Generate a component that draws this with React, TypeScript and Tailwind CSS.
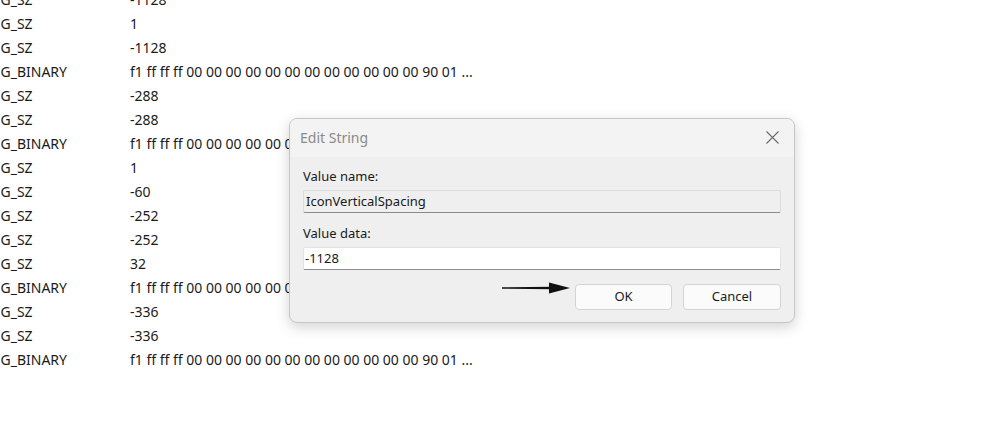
import React from 'react'

const BIN = 'f1 ff ff ff 00 00 00 00 00 00 00 00 00 00 00 00 90 01 ...'

const rows: { type: string; data: string }[] = [
  { type: 'REG_SZ', data: '-1128' },
  { type: 'REG_SZ', data: '1' },
  { type: 'REG_SZ', data: '-1128' },
  { type: 'REG_BINARY', data: BIN },
  { type: 'REG_SZ', data: '-288' },
  { type: 'REG_SZ', data: '-288' },
  { type: 'REG_BINARY', data: BIN },
  { type: 'REG_SZ', data: '1' },
  { type: 'REG_SZ', data: '-60' },
  { type: 'REG_SZ', data: '-252' },
  { type: 'REG_SZ', data: '-252' },
  { type: 'REG_SZ', data: '32' },
  { type: 'REG_BINARY', data: BIN },
  { type: 'REG_SZ', data: '-336' },
  { type: 'REG_SZ', data: '-336' },
  { type: 'REG_BINARY', data: BIN },
]

const EditStringDialog = () => {
  return (
    <div className="absolute left-[289px] top-[118px] w-[506px] h-[205px] rounded-[8px] border border-[#c6c6c6] bg-[#efefef] shadow-[0_4px_14px_rgba(0,0,0,0.18)] overflow-hidden">
      {/* title bar */}
      <div className="h-[38px] bg-[#f3f3f3] flex items-center justify-between pl-[10px] pr-[15px]">
        <span className="text-[14px] text-[#8a8a8a] leading-[18px]">Edit String</span>
        <svg width="13" height="13" viewBox="0 0 13 13" className="mt-[-2px]">
          <path d="M0.5 0.5 L12.5 12.5 M12.5 0.5 L0.5 12.5" stroke="#6b6b6b" strokeWidth="1.1" />
        </svg>
      </div>
      <div className="pl-[13px] pt-[11px] text-[13px] text-[#1a1a1a]">
        <div className="mb-[6px] leading-[16px]">Value name:</div>
        <div className="h-[23px] w-[478px] bg-[#efefef] border border-[#dcdcdc] border-b-[#8a8a8a] rounded-[2px] flex items-center pl-[2px]">
          IconVerticalSpacing
        </div>
        <div className="mt-[12px] mb-[6px] leading-[16px]">Value data:</div>
        <div className="h-[23px] w-[478px] bg-white border border-[#e3e3e3] border-b-[#8a8a8a] rounded-[2px] flex items-center pl-[1px]">
          -1128
        </div>
        <div className="mt-[14px] flex items-center justify-end w-[478px]">
          <svg width="68" height="14" viewBox="0 0 68 14" className="mr-[5px] mt-[-18px]">
            <path d="M0 6.2 L50 5.8 L50 8.2 L0 7.8 Z" fill="#111" />
            <path d="M47 1.5 L68 7 L47 12.5 Z" fill="#111" />
          </svg>
          <button className="h-[26px] w-[97px] bg-[#fbfbfb] border border-[#d4d4d4] rounded-[4px] text-[13px] text-[#1a1a1a]">
            OK
          </button>
          <button className="ml-[11px] h-[26px] w-[98px] bg-[#fbfbfb] border border-[#d4d4d4] rounded-[4px] text-[13px] text-[#1a1a1a]">
            Cancel
          </button>
        </div>
      </div>
    </div>
  )
}

export default function App() {
  return (
    <div className="relative w-[995px] h-[421px] bg-white overflow-hidden font-['Noto_Sans',_sans-serif]">
      <div className="mt-[-13px] ml-[-16px]">
        {rows.map((r, i) => (
          <div key={i} className="flex h-[24px] items-center text-[14px] text-[#1a1a1a]">
            <span className="w-[146px] shrink-0">{r.type}</span>
            <span className="whitespace-nowrap">{r.data}</span>
          </div>
        ))}
      </div>
      <EditStringDialog />
    </div>
  )
}
